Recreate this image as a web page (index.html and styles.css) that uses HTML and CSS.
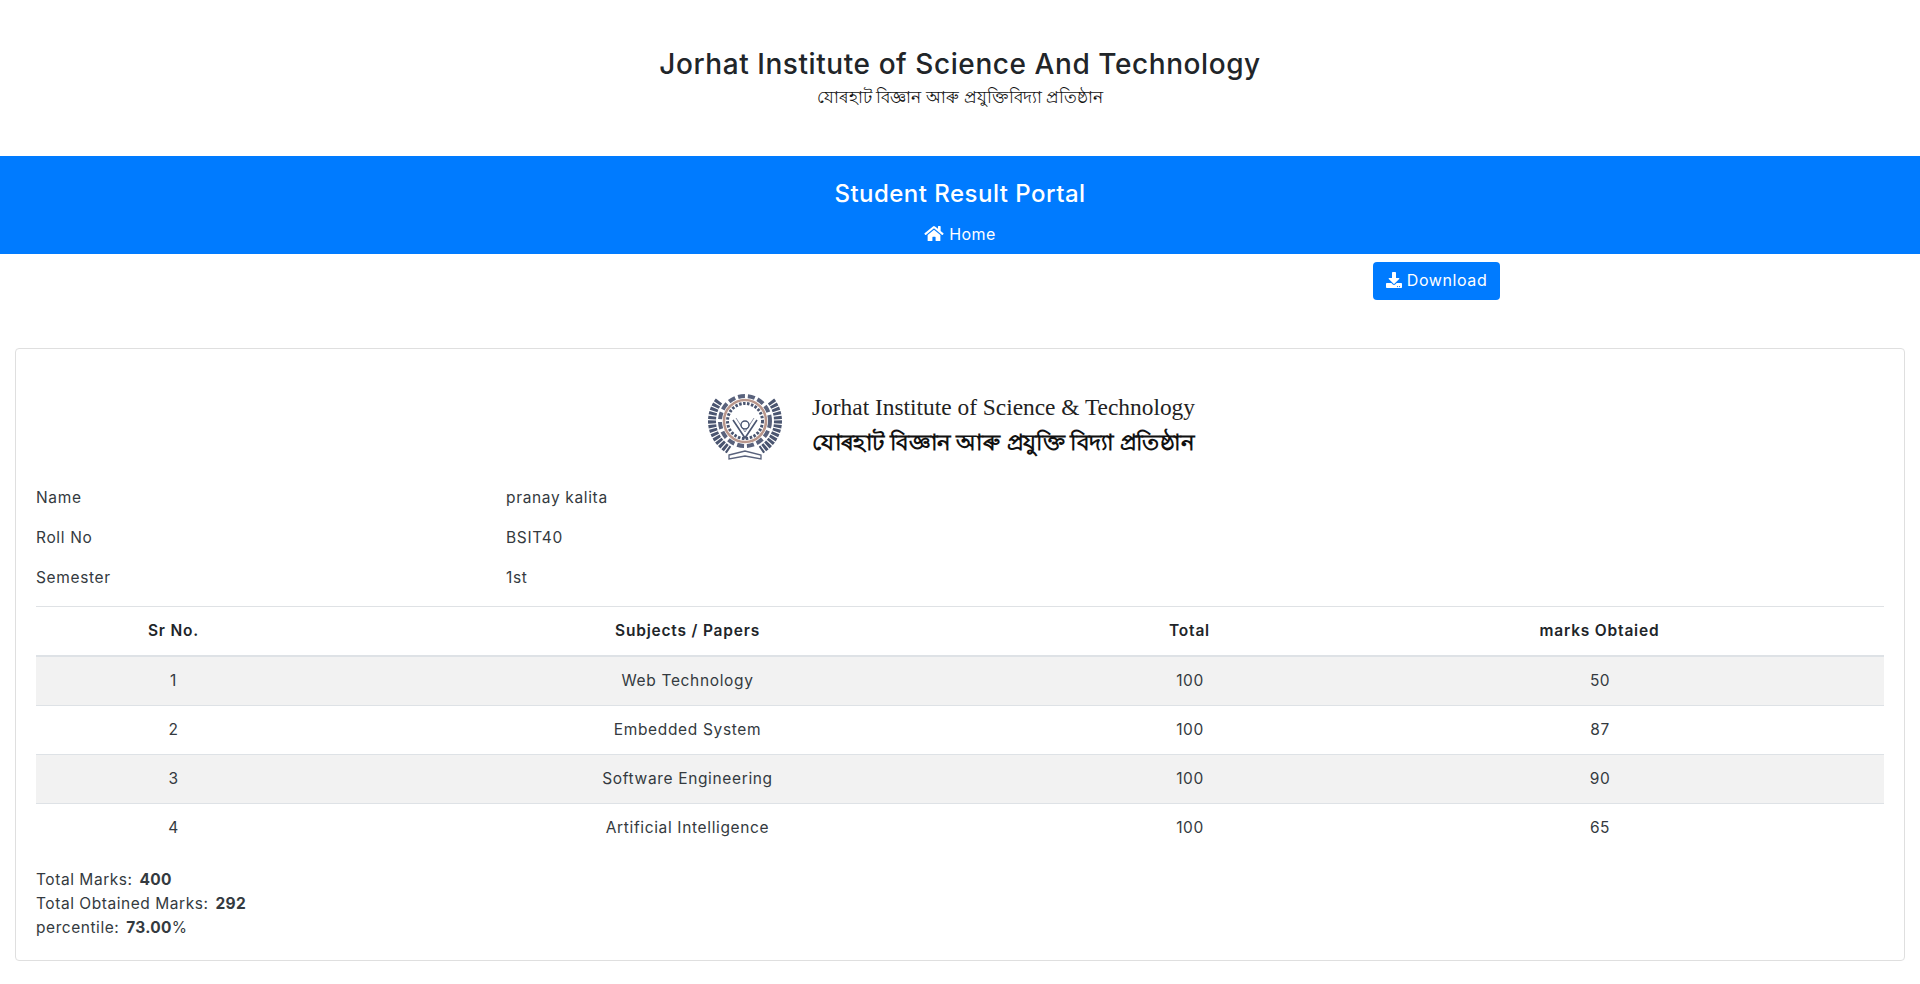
FILE: index.html
```html
<!DOCTYPE html>
<html lang="en">
<head>
<meta charset="utf-8">
<title>Student Result Portal</title>
<link rel="stylesheet" href="styles.css">
</head>
<body>
<header class="brand">
  <h3 class="brand-title">Jorhat Institute of Science And Technology</h3>
  <div class="brand-sub" lang="as">যোৰহাট বিজ্ঞান আৰু প্ৰযুক্তিবিদ্যা প্ৰতিষ্ঠান</div>
</header>
<nav class="bar">
  <h4 class="bar-title">Student Result Portal</h4>
  <a class="bar-link" href="#">
    <svg class="icon-home" viewBox="0 0 576 512"><path fill="currentColor" d="M280.37 148.26L96 300.11V464a16 16 0 0 0 16 16l112.06-.29a16 16 0 0 0 15.92-16V368a16 16 0 0 1 16-16h64a16 16 0 0 1 16 16v95.64a16 16 0 0 0 16 16.05L464 480a16 16 0 0 0 16-16V300L295.67 148.26a12.19 12.19 0 0 0-15.3 0zM571.6 251.47L488 182.56V44.05a12 12 0 0 0-12-12h-56a12 12 0 0 0-12 12v72.61L318.47 43a48 48 0 0 0-61 0L4.34 251.47a12 12 0 0 0-1.6 16.9l25.5 31A12 12 0 0 0 45.15 301l235.22-193.74a12.19 12.19 0 0 1 15.3 0L530.9 301a12 12 0 0 0 16.9-1.6l25.5-31a12 12 0 0 0-1.7-16.93z"/></svg>
    Home
  </a>
</nav>
<div class="actions">
  <button class="btn">
    <svg class="icon-dl" viewBox="0 0 512 512"><path fill="currentColor" d="M216 0h80c13.3 0 24 10.7 24 24v168h87.7c17.8 0 26.7 21.5 14.1 34.1L269.7 378.3c-7.5 7.5-19.8 7.5-27.3 0L90.1 226.1c-12.6-12.6-3.7-34.1 14.1-34.1H192V24c0-13.3 10.7-24 24-24zm296 376v112c0 13.3-10.7 24-24 24H24c-13.3 0-24-10.7-24-24V376c0-13.3 10.7-24 24-24h146.7l49 49c20.1 20.1 52.5 20.1 72.6 0l49-49H488c13.3 0 24 10.7 24 24zm-124 88c0-11-9-20-20-20s-20 9-20 20 9 20 20 20 20-9 20-20zm64 0c0-11-9-20-20-20s-20 9-20 20 9 20 20 20 20-9 20-20z"/></svg>
    Download
  </button>
</div>
<main class="card">
  <div class="logo-wrap">
    <svg class="logo" viewBox="0 0 510 85">
      <g fill="none">
        <circle cx="40" cy="36" r="25" stroke="#59627c" stroke-width="4" stroke-dasharray="7 3"/>
        <circle cx="40" cy="36" r="21" stroke="#b9978c" stroke-width="2.5"/>
        <circle cx="40" cy="36" r="17.5" stroke="#4a5570" stroke-width="3" stroke-dasharray="2.5 1.5"/>
        <path d="M28 35 L40 53 L52 35" stroke="#4a5570" stroke-width="1.6"/>
        <path d="M31 33 L40 47 L49 33" stroke="#8a90a4" stroke-width="1"/>
        <circle cx="40" cy="40" r="4" stroke="#4a5570" stroke-width="1.4"/>
        <path d="M14 16 C3 30 4 52 24 65" stroke="#4a5570" stroke-width="8" stroke-dasharray="3 1.2"/>
        <path d="M66 16 C77 30 76 52 56 65" stroke="#4a5570" stroke-width="8" stroke-dasharray="3 1.2"/>
        <path d="M24 70 L40 66 L56 70 L56 74 L40 71 L24 74 Z" stroke="#59627c" stroke-width="1.3"/>
      </g>
      <text class="logo-en" x="107" y="29.5" textLength="383" lengthAdjust="spacingAndGlyphs">Jorhat Institute of Science &amp; Technology</text>
      <text class="logo-as" x="107" y="65" lang="as" textLength="382" lengthAdjust="spacingAndGlyphs">যোৰহাট বিজ্ঞান আৰু প্ৰযুক্তি বিদ্যা প্ৰতিষ্ঠান</text>
    </svg>
  </div>
  <dl class="info">
    <dt>Name</dt><dd>pranay kalita</dd>
    <dt>Roll No</dt><dd>BSIT40</dd>
    <dt>Semester</dt><dd>1st</dd>
  </dl>
  <table class="marks">
    <colgroup><col class="c1"><col class="c2"><col class="c3"><col class="c4"></colgroup>
    <thead><tr><th>Sr No.</th><th>Subjects / Papers</th><th>Total</th><th>marks Obtaied</th></tr></thead>
    <tbody>
      <tr><td>1</td><td>Web Technology</td><td class="num">100</td><td class="num">50</td></tr>
      <tr><td>2</td><td>Embedded System</td><td class="num">100</td><td class="num">87</td></tr>
      <tr><td>3</td><td>Software Engineering</td><td class="num">100</td><td class="num">90</td></tr>
      <tr><td>4</td><td>Artificial Intelligence</td><td class="num">100</td><td class="num">65</td></tr>
    </tbody>
  </table>
  <div class="summary">
    <div>Total Marks: <b>400</b></div>
    <div>Total Obtained Marks: <b>292</b></div>
    <div>percentile: <b>73.00</b>%</div>
  </div>
</main>
</body>
</html>
```
FILE: styles.css
```css
* { box-sizing: border-box; }
html, body { margin: 0; padding: 0; }
body {
  font-family: Inter, "Noto Sans", sans-serif;
  font-size: 15.5px;
  letter-spacing: 0.65px;
  line-height: 24px;
  color: #343a40;
  background: #fff;
}
.brand { height: 156px; padding-top: 46px; text-align: center; color: #212529; }
.brand-title { margin: 0; font-size: 28px; line-height: 36px; font-weight: 500; letter-spacing: 0.57px; }
.brand-sub { margin-top: 3px; font-size: 16.7px; line-height: 24px; color: #111; letter-spacing: 0; }
.bar { height: 98px; padding-top: 20px; background: #007bff; color: #fff; text-align: center; }
.bar-title { margin: 0; font-size: 24px; line-height: 36px; font-weight: 500; letter-spacing: 0.48px; }
.bar-link { display: block; margin-top: 10px; color: #fff; text-decoration: none; font-size: 16px; line-height: 24px; letter-spacing: 0.4px; }
.icon-home { width: 20px; height: 17px; vertical-align: -2px; }
.icon-dl { width: 16px; height: 16px; vertical-align: -2px; }
.actions { height: 94px; padding: 8px 420px 0 0; display: flex; justify-content: flex-end; align-items: flex-start; }
.btn { height: 38px; width: 127px; border: 0; border-radius: 4px; background: #007bff; color: #fff; font: inherit; font-size: 16px; letter-spacing: 0.6px; padding: 0 0 2px; }
.card { margin: 0 15px; height: 613px; border: 1px solid #dfdfdf; border-radius: 4px; padding: 20px; }
.logo-wrap { display: flex; justify-content: center; height: 105px; padding-top: 16px; }
.logo { width: 510px; height: 85px; overflow: visible; }
.logo-en { font-family: "Liberation Serif", serif; font-size: 23.4px; fill: #222; letter-spacing: 0; }
.logo-as { font-family: "Noto Sans", sans-serif; font-size: 22.4px; font-weight: 600; fill: #111; letter-spacing: 0; }
.info { margin: 0; padding: 4px 0 8px; display: grid; grid-template-columns: 470px 1fr; grid-auto-rows: 40px; align-items: center; border-bottom: 1px solid #dfe2e5; }
.info dt, .info dd { margin: 0; }
.marks { width: 100%; border-collapse: collapse; table-layout: fixed; text-align: center; }
.c1 { width: 274px; } .c2 { width: 754px; } .c3 { width: 250px; }
.marks th { height: 49px; padding: 0 0 0 1px; font-weight: 600; color: #212529; letter-spacing: 0.8px; border-bottom: 2px solid #dee2e6; }
.marks td { height: 49px; padding: 0 0 0 1px; border-bottom: 1px solid #dee2e6; }
.marks .num { padding-left: 2px; letter-spacing: 0.5px; }
.marks tbody tr:nth-child(odd) { background: #f2f2f2; }
.marks tbody tr:last-child td { border-bottom: 0; }
.summary { margin-top: 16px; letter-spacing: 0.55px; }
.summary b { margin-left: 2px; font-weight: 700; letter-spacing: 0.3px; }
```
